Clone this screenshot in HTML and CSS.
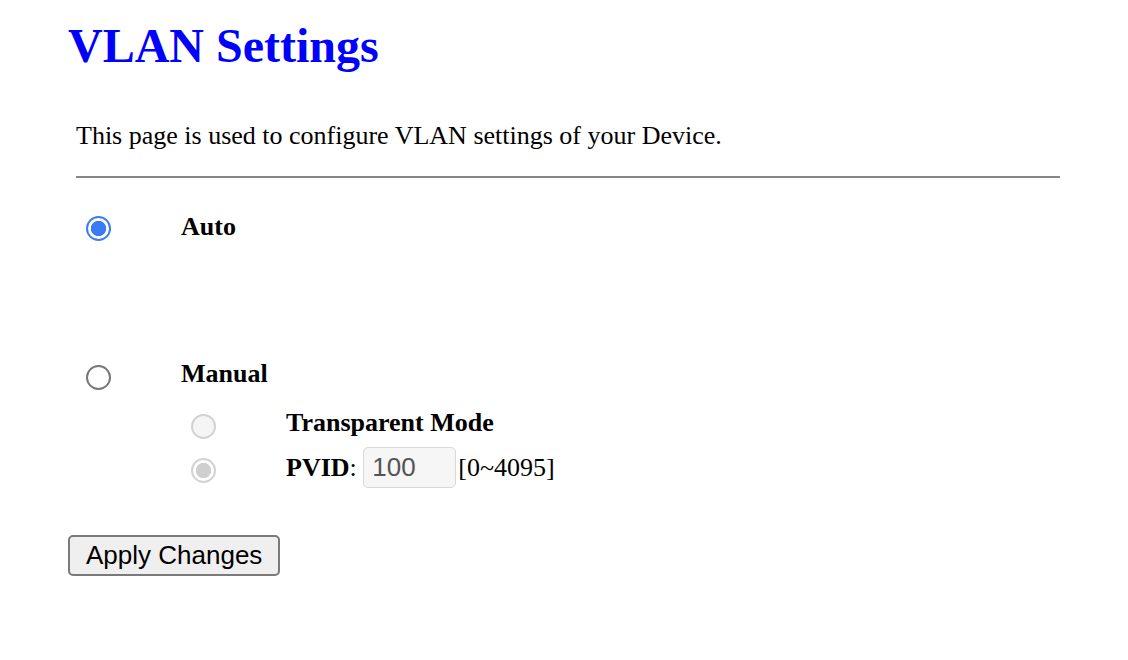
FILE: index.html
```html
<!DOCTYPE html>
<html>
<head>
<meta charset="utf-8">
<title>VLAN Settings</title>
<link rel="stylesheet" href="styles.css">
</head>
<body>
<div class="page">
  <h2 class="title">VLAN Settings</h2>
  <p class="desc">This page is used to configure VLAN settings of your Device.</p>
  <hr class="rule">
  <form class="options">
    <div class="row row-auto">
      <input class="radio" type="radio" name="mode" checked>
      <span class="label">Auto</span>
    </div>
    <div class="row row-manual">
      <input class="radio" type="radio" name="mode">
      <span class="label">Manual</span>
    </div>
    <div class="row sub row-trans">
      <input class="radio" type="radio" name="sub" disabled>
      <span class="label">Transparent Mode</span>
    </div>
    <div class="row sub row-pvid">
      <input class="radio" type="radio" name="sub" checked disabled>
      <span class="label"><b>PVID</b><span class="colon">: </span><input class="pvid" type="text" value="100" disabled><span class="range">[0~4095]</span></span>
    </div>
  </form>
  <button class="apply" type="button">Apply Changes</button>
</div>
</body>
</html>
```

FILE: styles.css
```css
html, body {
  margin: 0;
  padding: 0;
  background: #ffffff;
}

.page {
  padding: 18px 0 0 68px;
  font-family: "Liberation Serif", "Times New Roman", serif;
  color: #000;
}

.title {
  margin: 0;
  font-size: 48px;
  line-height: 56px;
  font-weight: bold;
  color: #0000ff;
}

.desc {
  margin: 47px 0 0 8px;
  font-size: 26px;
  line-height: 30px;
}

.rule {
  margin: 25px 0 0 8px;
  width: 984px;
  height: 0;
  border: 0;
  border-top: 2px solid #868686;
}

.options {
  margin: 32px 0 0 0;
  padding-left: 18px;
}

.row {
  display: flex;
  align-items: flex-start;
}

.row-auto .label {
  padding-top: 2px;
}

.row-manual {
  margin-top: 117px;
}

.row-trans {
  margin-top: 18px;
}

.row-pvid {
  margin-top: 8px;
  align-items: center;
}

.sub {
  padding-left: 105px;
}

.radio {
  appearance: none;
  -webkit-appearance: none;
  flex: none;
  box-sizing: border-box;
  width: 25px;
  height: 25px;
  margin: 6px 70px 0 0;
  border: 2px solid #777777;
  border-radius: 50%;
  background: #ffffff;
}

.radio:checked {
  border-color: #3b7cf6;
  background: radial-gradient(circle at center, #3b7cf6 0, #3b7cf6 7.3px, #ffffff 8px);
}

.radio:disabled {
  border-color: #d2d2d2;
  background: #f5f5f5;
}

.radio:checked:disabled {
  border-color: #d2d2d2;
  background: radial-gradient(circle at center, #cfcfcf 0, #cfcfcf 7.3px, #ffffff 8px);
}

.row-pvid .radio {
  margin-top: 5px;
}

.label {
  font-size: 26px;
  line-height: 30px;
  font-weight: bold;
  white-space: nowrap;
}

.colon,
.range {
  font-weight: normal;
}

.pvid {
  box-sizing: border-box;
  width: 93px;
  height: 41px;
  margin: 0;
  padding: 0 0 0 8px;
  border: 1px solid #d8d8d8;
  border-radius: 5px;
  background: #f6f6f6;
  color: #545454;
  font-family: "Liberation Sans", Arial, sans-serif;
  font-size: 26px;
  vertical-align: baseline;
}

.range {
  margin-left: 2px;
}

.apply {
  display: block;
  box-sizing: border-box;
  margin: 47px 0 0 0;
  height: 41px;
  padding: 0 16px;
  border: 2px solid #7a7a7a;
  border-radius: 5px;
  background: #efefef;
  color: #000;
  font-family: "Liberation Sans", Arial, sans-serif;
  font-size: 26px;
}
```
